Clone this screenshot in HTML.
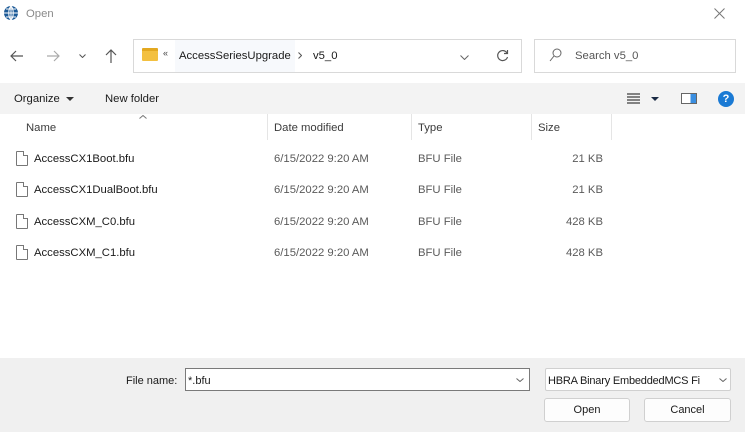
<!DOCTYPE html>
<html><head><style>
*{margin:0;padding:0;box-sizing:border-box}
body{width:745px;height:432px;background:#fff;font-family:"Liberation Sans",sans-serif;font-size:11.3px;color:#1a1a1a;position:relative;overflow:hidden}
.a{position:absolute;white-space:nowrap}
.box{position:absolute;border:1px solid #d9d9d9;background:#fff}
.sep{position:absolute;top:114px;width:1px;height:26px;background:#e5e5e5}
.row{position:absolute;left:0;width:745px;height:22px}
.fi{position:absolute;left:16px;top:3px;width:12px;height:15px;border:1px solid #777;border-radius:1px;background:#fff}
.fi:after{content:"";position:absolute;right:-1px;top:-1px;width:4px;height:4px;background:#fff;border-left:1px solid #777;border-bottom:1px solid #777}
.g{color:#5a5a5a}
.r{text-align:right;width:60px}
.btn{position:absolute;background:#fdfdfd;border:1px solid #d0d0d0;border-radius:3px;text-align:center;line-height:22px}
svg{position:absolute}
</style></head><body>
<svg style="left:3px;top:5px" width="16" height="16" viewBox="0 0 16 16"><circle cx="8" cy="8" r="7" fill="#1c5a97"/><path d="M1 8h14M8 1v14M3 4h10M3 12h10M8 1c-3 3-3 11 0 14M8 1c3 3 3 11 0 14" stroke="#fff" stroke-width="1" fill="none"/></svg>
<div class="a" style="left:26px;top:8px;color:#8a8a8a">Open</div>
<svg style="left:714px;top:8px" width="11" height="11" viewBox="0 0 11 11"><path d="M0.5 0.5L10.5 10.5M10.5 0.5L0.5 10.5" stroke="#777" stroke-width="1"/></svg>
<svg style="left:10px;top:50px" width="14" height="12" viewBox="0 0 14 12"><path d="M13 6H1M6 1L1 6l5 5" stroke="#555" stroke-width="1.2" fill="none"/></svg>
<svg style="left:46px;top:50px" width="14" height="12" viewBox="0 0 14 12"><path d="M1 6h12M8 1l5 5-5 5" stroke="#aaa" stroke-width="1.2" fill="none"/></svg>
<svg style="left:79px;top:54px" width="7" height="4" viewBox="0 0 7 4"><path d="M0.5 0.5l3 3 3-3" stroke="#555" fill="none"/></svg>
<svg style="left:105px;top:49px" width="12" height="14" viewBox="0 0 12 14"><path d="M6 14V1M1 6l5-5 5 5" stroke="#555" stroke-width="1.2" fill="none"/></svg>
<div class="box" style="left:133px;top:39px;width:389px;height:34px"></div>
<div class="a" style="left:175px;top:40px;width:120px;height:32px;background:#f7f9fc"></div>
<div class="a" style="left:142px;top:48px;width:16px;height:13px;background:#f3c040;border-radius:1px;border-top:3px solid #e3a820"></div>
<div class="a" style="left:163px;top:48px;font-size:9px;color:#444">«</div>
<div class="a" style="left:179px;top:50px">AccessSeriesUpgrade</div>
<svg style="left:298px;top:52px" width="4" height="7" viewBox="0 0 4 7"><path d="M0.5 0.5l3 3-3 3" stroke="#555" fill="none"/></svg>
<div class="a" style="left:313px;top:50px">v5_0</div>
<svg style="left:460px;top:55px" width="9" height="5" viewBox="0 0 9 5"><path d="M0.5 0.5l4 4 4-4" stroke="#666" fill="none"/></svg>
<svg style="left:496px;top:49px" width="13" height="13" viewBox="0 0 13 13"><path d="M11 4A5 5 0 1 0 11.5 8" stroke="#555" stroke-width="1.2" fill="none"/><path d="M11.5 1v3.5H8" stroke="#555" stroke-width="1.2" fill="none"/></svg>
<div class="box" style="left:534px;top:39px;width:202px;height:34px"></div>
<svg style="left:549px;top:48px" width="13" height="14" viewBox="0 0 13 14"><circle cx="8" cy="5" r="4" stroke="#666" fill="none"/><path d="M5 8L1 13" stroke="#666"/></svg>
<div class="a" style="left:575px;top:50px;color:#555">Search v5_0</div>
<div class="a" style="left:0;top:83px;width:745px;height:31px;background:#f3f3f3"></div>
<div class="a" style="left:14px;top:93px">Organize</div>
<svg style="left:66px;top:97px" width="8" height="4" viewBox="0 0 8 4"><path d="M0 0h8L4 4z" fill="#333"/></svg>
<div class="a" style="left:105px;top:93px">New folder</div>
<svg style="left:627px;top:93px" width="13" height="11" viewBox="0 0 13 11"><path d="M0 1h13M0 4h13M0 7h13M0 10h13" stroke="#111"/></svg>
<svg style="left:651px;top:97px" width="8" height="4" viewBox="0 0 8 4"><path d="M0 0h8L4 4z" fill="#1a2a44"/></svg>
<div class="a" style="left:681px;top:93px;width:16px;height:11px;border:1px solid #666;background:linear-gradient(90deg,#fff 60%,#3a8ee0 60%)"></div>
<div class="a" style="left:718px;top:91px;width:16px;height:16px;border-radius:50%;background:#1a7ad4;color:#fff;font-weight:bold;font-size:11px;text-align:center;line-height:16px">?</div>
<svg style="left:139px;top:115px" width="8" height="4" viewBox="0 0 8 4"><path d="M0.5 3.5l3.5-3 3.5 3" stroke="#777" fill="none"/></svg>
<div class="a" style="left:26px;top:122px;color:#3b3b3b">Name</div>
<div class="sep" style="left:267px"></div>
<div class="a" style="left:274px;top:122px;color:#3b3b3b">Date modified</div>
<div class="sep" style="left:411px"></div>
<div class="a" style="left:418px;top:122px;color:#3b3b3b">Type</div>
<div class="sep" style="left:531px"></div>
<div class="a" style="left:538px;top:122px;color:#3b3b3b">Size</div>
<div class="sep" style="left:611px"></div>

<div class="row" style="top:148px"><div class="fi"></div><div class="a" style="left:34px;top:5px">AccessCX1Boot.bfu</div><div class="a g" style="left:274px;top:5px">6/15/2022 9:20 AM</div><div class="a g" style="left:418px;top:5px">BFU File</div><div class="a g r" style="left:543px;top:5px">21 KB</div></div>
<div class="row" style="top:179px"><div class="fi"></div><div class="a" style="left:34px;top:5px">AccessCX1DualBoot.bfu</div><div class="a g" style="left:274px;top:5px">6/15/2022 9:20 AM</div><div class="a g" style="left:418px;top:5px">BFU File</div><div class="a g r" style="left:543px;top:5px">21 KB</div></div>
<div class="row" style="top:211px"><div class="fi"></div><div class="a" style="left:34px;top:5px">AccessCXM_C0.bfu</div><div class="a g" style="left:274px;top:5px">6/15/2022 9:20 AM</div><div class="a g" style="left:418px;top:5px">BFU File</div><div class="a g r" style="left:543px;top:5px">428 KB</div></div>
<div class="row" style="top:242px"><div class="fi"></div><div class="a" style="left:34px;top:5px">AccessCXM_C1.bfu</div><div class="a g" style="left:274px;top:5px">6/15/2022 9:20 AM</div><div class="a g" style="left:418px;top:5px">BFU File</div><div class="a g r" style="left:543px;top:5px">428 KB</div></div>

<div class="a" style="left:0;top:358px;width:745px;height:74px;background:#f0f0f0"></div>
<div class="a" style="left:126px;top:375px;font-size:11px">File name:</div>
<div class="a" style="left:185px;top:368px;width:345px;height:23px;background:#fff;border:1px solid #7a7a7a"></div>
<div class="a" style="left:188px;top:375px;font-size:11px">*.bfu</div>
<svg style="left:516px;top:378px" width="8" height="4" viewBox="0 0 8 4"><path d="M0.5 0.5l3.5 3 3.5-3" stroke="#666" fill="none"/></svg>
<div class="a" style="left:545px;top:368px;width:186px;height:23px;background:#fff;border:1px solid #d0d0d0;border-radius:2px"></div>
<div class="a" style="left:548px;top:375px;font-size:11px;letter-spacing:-0.2px">HBRA Binary EmbeddedMCS Fi</div>
<svg style="left:719px;top:378px" width="8" height="4" viewBox="0 0 8 4"><path d="M0.5 0.5l3.5 3 3.5-3" stroke="#666" fill="none"/></svg>
<div class="btn" style="left:544px;top:398px;width:86px;height:24px;font-size:11px">Open</div>
<div class="btn" style="left:644px;top:398px;width:87px;height:24px;font-size:11px">Cancel</div>
</body></html>
